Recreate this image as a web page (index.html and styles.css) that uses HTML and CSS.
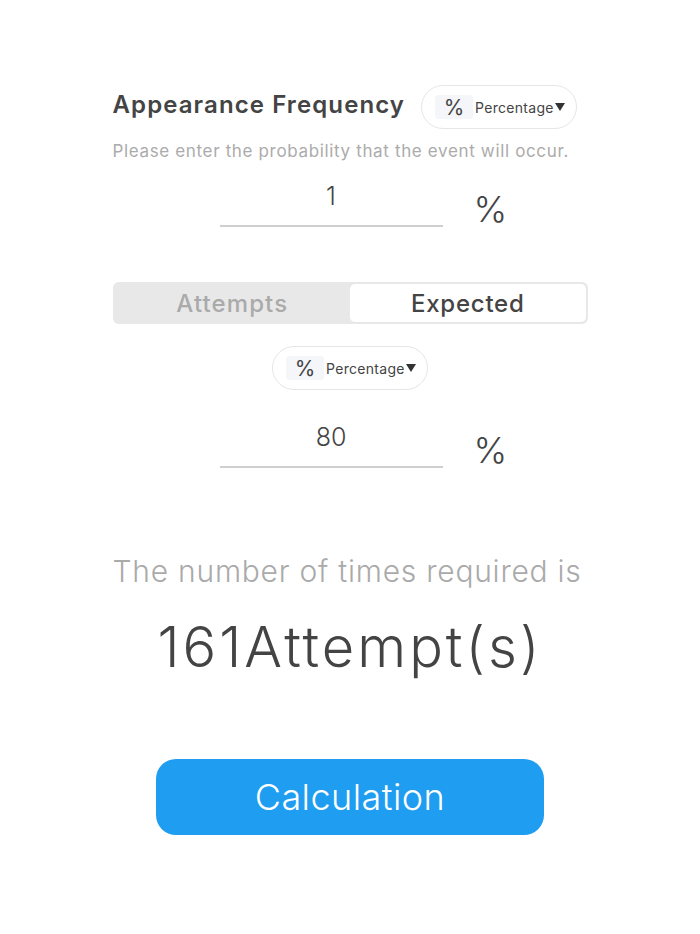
FILE: index.html
```html
<!DOCTYPE html>
<html lang="en">
<head>
<meta charset="utf-8">
<title>Appearance Frequency</title>
<link rel="stylesheet" href="styles.css">
</head>
<body>
<main class="page">
  <div class="header">
    <h1 class="title">Appearance Frequency</h1>
    <div class="pill">
      <span class="pill-icon">%</span>
      <span class="pill-label">Percentage</span>
      <span class="pill-caret"></span>
    </div>
  </div>
  <p class="hint">Please enter the probability that the event will occur.</p>
  <div class="input-row first">
    <div class="field">1</div>
    <span class="unit">%</span>
  </div>

  <div class="segment">
    <div class="seg-item">Attempts</div>
    <div class="seg-item active">Expected</div>
  </div>

  <div class="pill-row">
    <div class="pill">
      <span class="pill-icon">%</span>
      <span class="pill-label">Percentage</span>
      <span class="pill-caret"></span>
    </div>
  </div>
  <div class="input-row second">
    <div class="field">80</div>
    <span class="unit">%</span>
  </div>

  <p class="result-label">The number of times required is</p>
  <p class="result">161Attempt(s)</p>

  <div class="btn-row">
    <button class="calc">Calculation</button>
  </div>
</main>
</body>
</html>
```

FILE: styles.css
```css
* { box-sizing: border-box; }
html, body {
  margin: 0;
  padding: 0;
  background: #ffffff;
}
body {
  font-family: Inter, "Noto Sans", sans-serif;
  color: #444444;
}
.page {
  width: 475px;
  margin: 0 auto;
  padding-top: 85px;
}
.header {
  display: flex;
  align-items: center;
  gap: 16px;
  height: 44px;
}
.title {
  margin: 0;
  font-size: 24px;
  font-weight: 600;
  line-height: 30px;
  letter-spacing: 1.1px;
  color: #444444;
  margin-top: -4px;
}
.pill {
  display: flex;
  align-items: center;
  width: 156px;
  height: 44px;
  border: 1.5px solid #e6e6e6;
  border-radius: 22px;
  padding-left: 13px;
  background: #fff;
}
.pill-icon {
  display: flex;
  align-items: center;
  justify-content: center;
  width: 38px;
  height: 24px;
  background: #f4f6f9;
  border-radius: 4px;
  font-size: 21px;
  font-weight: 400;
  color: #444;
}
.pill-label {
  font-size: 14px;
  color: #444;
  margin-left: 2px;
  letter-spacing: 0.3px;
}
.pill-caret {
  width: 0;
  height: 0;
  border-left: 5px solid transparent;
  border-right: 5px solid transparent;
  border-top: 8px solid #333;
  margin-left: 1px;
}
.hint {
  margin: 10px 0 0;
  font-size: 17px;
  line-height: 24px;
  letter-spacing: 0.65px;
  color: #ababab;
  font-weight: 400;
}
.input-row {
  display: flex;
  align-items: flex-end;
  margin-left: 107px;
}
.input-row.first { margin-top: 18px; }
.input-row.second { margin-top: 32px; }
.field {
  width: 223px;
  height: 46px;
  border-bottom: 2px solid #cfcfcf;
  text-align: center;
  font-size: 25px;
  font-weight: 300;
  line-height: 30px;
  color: #444;
}
.unit {
  margin-left: 31px;
  font-size: 36px;
  font-weight: 300;
  line-height: 40px;
  color: #444;
  margin-bottom: -2px;
}
.segment {
  display: flex;
  margin-top: 55px;
  height: 42px;
  background: #e8e8e8;
  border-radius: 6px;
  padding: 2px;
}
.seg-item {
  flex: 1;
  display: flex;
  align-items: center;
  justify-content: center;
  font-size: 24px;
  font-weight: 500;
  color: #aaaaaa;
  border-radius: 5px;
  letter-spacing: 1.1px;
}
.seg-item.active {
  background: #ffffff;
  color: #444444;
  letter-spacing: 0.75px;
}
.pill-row {
  display: flex;
  justify-content: center;
  margin-top: 22px;
}
.result-label {
  margin: 83px 0 0;
  text-align: left;
  white-space: nowrap;
  font-size: 30px;
  font-weight: 300;
  line-height: 40px;
  letter-spacing: 0.75px;
  color: #aaaaaa;
}
.result {
  margin: 26px 0 0;
  text-align: center;
  font-size: 56px;
  font-weight: 300;
  line-height: 60px;
  letter-spacing: 3px;
  color: #444444;
}
.btn-row {
  display: flex;
  justify-content: center;
  margin-top: 82px;
}
.calc {
  width: 388px;
  height: 76px;
  border: none;
  border-radius: 20px;
  background: #1e9df1;
  color: #ffffff;
  font-family: Inter, "Noto Sans", sans-serif;
  font-size: 36px;
  font-weight: 300;
  letter-spacing: 0.45px;
}
```
